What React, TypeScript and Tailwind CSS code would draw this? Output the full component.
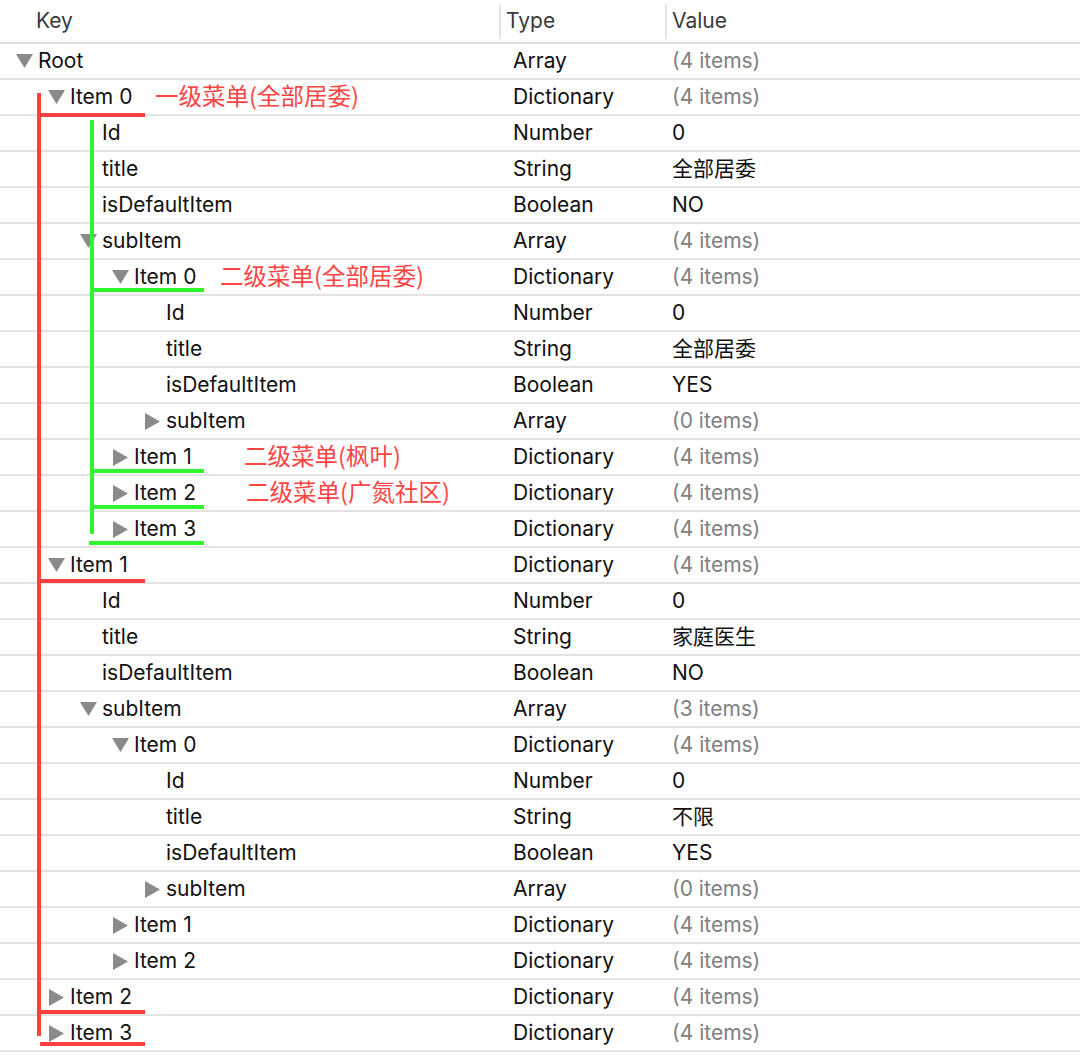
import React from "react"

type Row = {
  key: string
  depth: number
  arrow?: "down" | "right"
  type: string
  value: string
  muted?: boolean
}

const items = (n: number) => `(${n} items)`

const rows: Row[] = [
  { key: "Root", depth: 0, arrow: "down", type: "Array", value: items(4), muted: true },
  { key: "Item 0", depth: 1, arrow: "down", type: "Dictionary", value: items(4), muted: true },
  { key: "Id", depth: 2, type: "Number", value: "0" },
  { key: "title", depth: 2, type: "String", value: "全部居委" },
  { key: "isDefaultItem", depth: 2, type: "Boolean", value: "NO" },
  { key: "subItem", depth: 2, arrow: "down", type: "Array", value: items(4), muted: true },
  { key: "Item 0", depth: 3, arrow: "down", type: "Dictionary", value: items(4), muted: true },
  { key: "Id", depth: 4, type: "Number", value: "0" },
  { key: "title", depth: 4, type: "String", value: "全部居委" },
  { key: "isDefaultItem", depth: 4, type: "Boolean", value: "YES" },
  { key: "subItem", depth: 4, arrow: "right", type: "Array", value: items(0), muted: true },
  { key: "Item 1", depth: 3, arrow: "right", type: "Dictionary", value: items(4), muted: true },
  { key: "Item 2", depth: 3, arrow: "right", type: "Dictionary", value: items(4), muted: true },
  { key: "Item 3", depth: 3, arrow: "right", type: "Dictionary", value: items(4), muted: true },
  { key: "Item 1", depth: 1, arrow: "down", type: "Dictionary", value: items(4), muted: true },
  { key: "Id", depth: 2, type: "Number", value: "0" },
  { key: "title", depth: 2, type: "String", value: "家庭医生" },
  { key: "isDefaultItem", depth: 2, type: "Boolean", value: "NO" },
  { key: "subItem", depth: 2, arrow: "down", type: "Array", value: items(3), muted: true },
  { key: "Item 0", depth: 3, arrow: "down", type: "Dictionary", value: items(4), muted: true },
  { key: "Id", depth: 4, type: "Number", value: "0" },
  { key: "title", depth: 4, type: "String", value: "不限" },
  { key: "isDefaultItem", depth: 4, type: "Boolean", value: "YES" },
  { key: "subItem", depth: 4, arrow: "right", type: "Array", value: items(0), muted: true },
  { key: "Item 1", depth: 3, arrow: "right", type: "Dictionary", value: items(4), muted: true },
  { key: "Item 2", depth: 3, arrow: "right", type: "Dictionary", value: items(4), muted: true },
  { key: "Item 2", depth: 1, arrow: "right", type: "Dictionary", value: items(4), muted: true },
  { key: "Item 3", depth: 1, arrow: "right", type: "Dictionary", value: items(4), muted: true },
]

// text left edge per depth
const indent = ["pl-[16px]", "pl-[48px]", "pl-[80px]", "pl-[112px]", "pl-[144px]"]

function Arrow({ dir }: { dir?: "down" | "right" }) {
  return (
    <div className="flex w-[22px] shrink-0 items-center">
      {dir === "down" && (
        <svg width="17" height="14" viewBox="0 0 17 14">
          <polygon points="0,0 17,0 8.5,14" fill="#8a8a8a" />
        </svg>
      )}
      {dir === "right" && (
        <svg width="15" height="17" viewBox="0 0 15 17" className="ml-[1px]">
          <polygon points="0,0 15,8.5 0,17" fill="#8a8a8a" />
        </svg>
      )}
    </div>
  )
}

function TreeRow({ row }: { row: Row }) {
  return (
    <div className="flex h-[36px] items-center border-b-2 border-[#e3e3e3]">
      <div className={`flex w-[499px] items-center ${indent[row.depth]}`}>
        <Arrow dir={row.arrow} />
        <span>{row.key}</span>
      </div>
      <div className="w-[166px] pl-[14px]">{row.type}</div>
      <div className={`pl-[7px] ${row.muted ? "text-[#808080]" : ""}`}>{row.value}</div>
    </div>
  )
}

export default function App() {
  return (
    <div
      className="relative h-[1060px] w-[1080px] overflow-hidden bg-white text-[21px] text-[#111]"
      style={{ fontFamily: 'Inter, "Noto Sans CJK SC", sans-serif' }}
    >
      {/* Header */}
      <div className="flex h-[44px] items-center border-b-2 border-[#dedede] text-[#3a3a3a]">
        <div className="w-[499px] pl-[36px]">Key</div>
        <div className="flex w-[166px] items-center">
          <div className="h-[35px] w-[2px] bg-[#e4e4e4]" />
          <span className="pl-[5px]">Type</span>
        </div>
        <div className="flex items-center">
          <div className="h-[35px] w-[2px] bg-[#e4e4e4]" />
          <span className="pl-[5px]">Value</span>
        </div>
      </div>

      {rows.map((row, i) => (
        <TreeRow key={i} row={row} />
      ))}

      {/* hand-drawn annotations over the tree */}
      <div className="pointer-events-none absolute inset-0">
        {/* red: level-1 menu */}
        <div className="absolute left-[37px] top-[93px] h-[943px] w-[4px] bg-[#ff4040]" />
        <div className="absolute left-[37px] top-[113px] h-[4px] w-[108px] bg-[#ff4040]" />
        <div className="absolute left-[37px] top-[579px] h-[4px] w-[108px] bg-[#ff4040]" />
        <div className="absolute left-[40px] top-[1010px] h-[4px] w-[105px] bg-[#ff4040]" />
        <div className="absolute left-[40px] top-[1042px] h-[4px] w-[105px] bg-[#ff4040]" />

        {/* green: level-2 menu */}
        <div className="absolute left-[90px] top-[120px] h-[414px] w-[4px] bg-[#2ef52e]" />
        <div className="absolute left-[92px] top-[288px] h-[4px] w-[112px] bg-[#2ef52e]" />
        <div className="absolute left-[92px] top-[469px] h-[4px] w-[112px] bg-[#2ef52e]" />
        <div className="absolute left-[92px] top-[505px] h-[4px] w-[112px] bg-[#2ef52e]" />
        <div className="absolute left-[89px] top-[541px] h-[4px] w-[115px] bg-[#2ef52e]" />

        {/* labels */}
        <div
          className="text-[23.5px] leading-none text-[#ff4444]"
          style={{ fontFamily: '"Noto Sans CJK SC", sans-serif' }}
        >
          <span className="absolute left-[155px] top-[84px] whitespace-nowrap">一级菜单(全部居委)</span>
          <span className="absolute left-[220px] top-[264px] whitespace-nowrap">二级菜单(全部居委)</span>
          <span className="absolute left-[244px] top-[444px] whitespace-nowrap">二级菜单(枫叶)</span>
          <span className="absolute left-[246px] top-[480px] whitespace-nowrap">二级菜单(广氮社区)</span>
        </div>
      </div>
    </div>
  )
}
